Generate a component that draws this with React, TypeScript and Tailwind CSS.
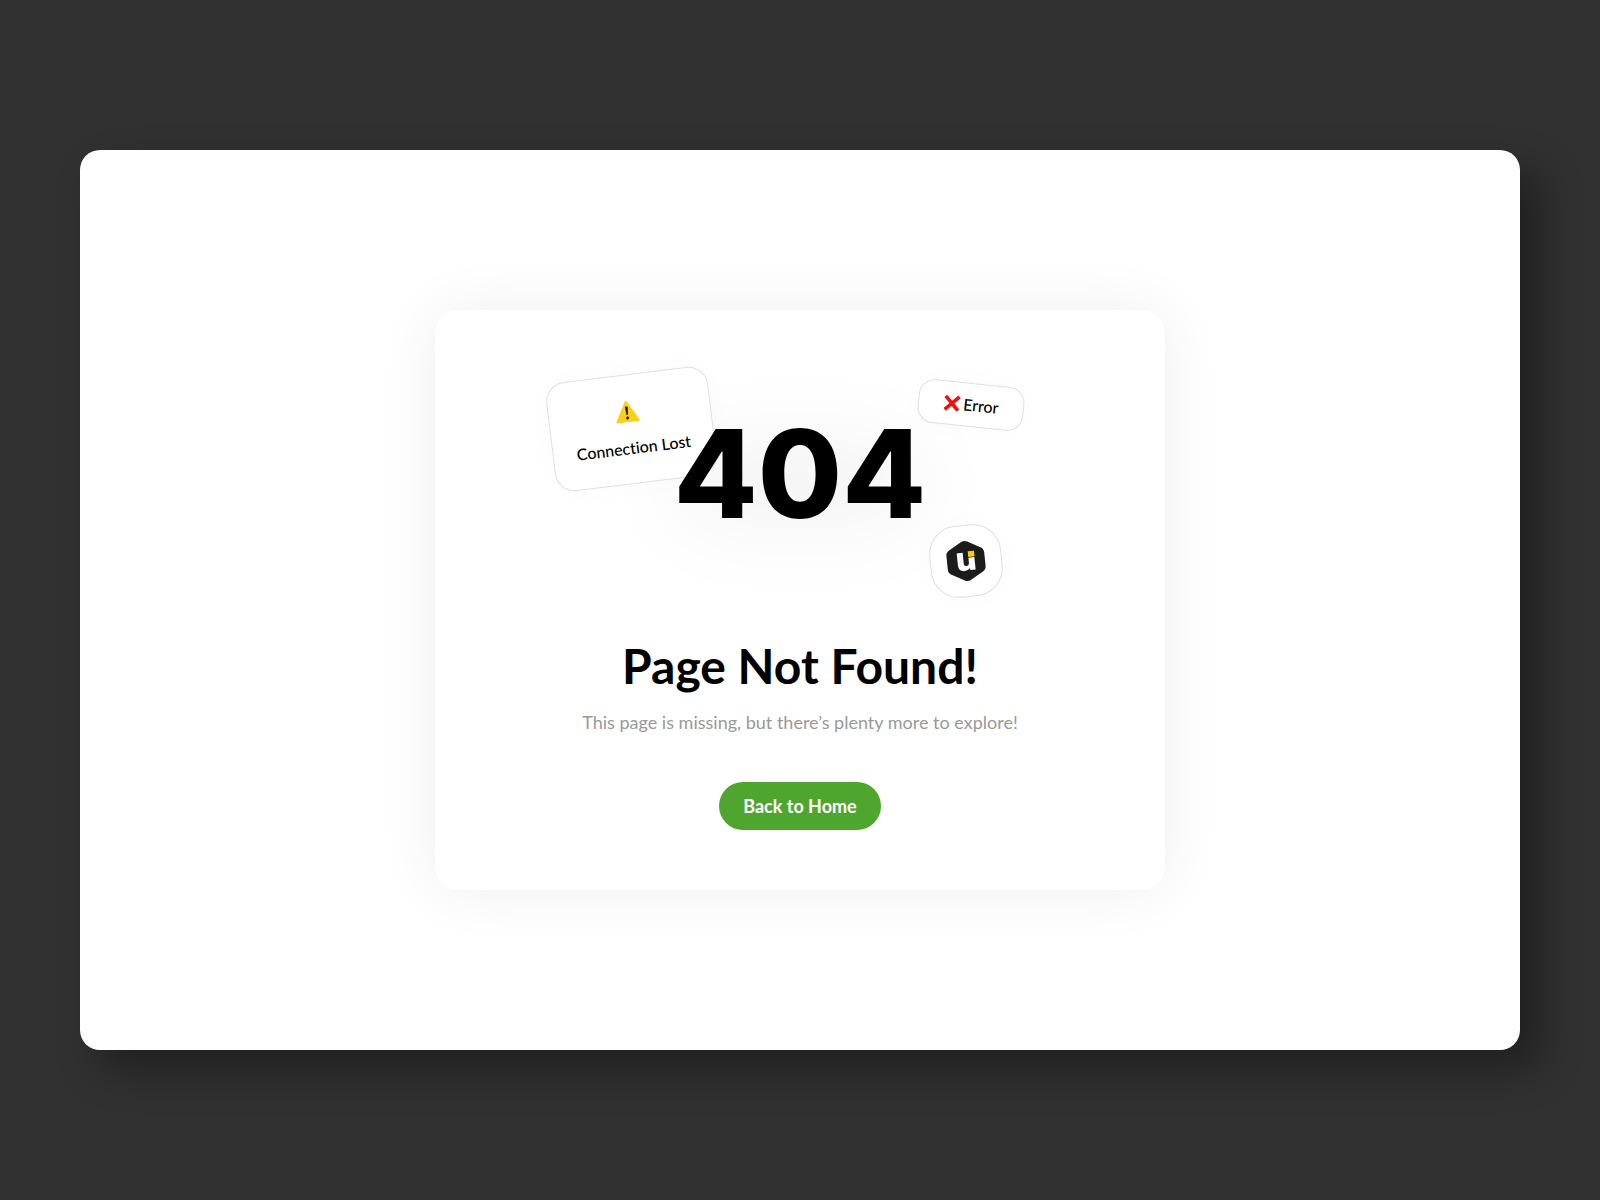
function WarningIcon() {
  return (
    <svg viewBox="0 0 24 22" className="mr-1.5 h-[22px] w-6" aria-hidden="true">
      <path d="M12 1 23 21H1Z" fill="#fdd017" stroke="#fdd017" strokeWidth="1.6" strokeLinejoin="round" />
      <path d="M10.6 6.2h2.8l-.7 8.3h-1.4z" fill="#151515" />
      <circle cx="12" cy="17.6" r="1.4" fill="#151515" />
    </svg>
  );
}

function CrossIcon() {
  return (
    <svg viewBox="0 0 18 18" className="h-[18px] w-[18px]" aria-hidden="true">
      <path d="M2 2.5 15.5 16M15.8 2 2.2 16" fill="none" stroke="#ee1111" strokeWidth="3.6" />
    </svg>
  );
}

function HexLogo() {
  return (
    <svg viewBox="0 0 40 42" className="h-[42px] w-10" role="img" aria-label="ui">
      <path
        d="M16.8 1.8Q20 0 23.2 1.8L35.8 8.8Q39 10.6 39 14.2V27.8Q39 31.4 35.8 33.2L23.2 40.2Q20 42 16.8 40.2L4.2 33.2Q1 31.4 1 27.8V14.2Q1 10.6 4.2 8.8Z"
        fill="#1c1c1c"
      />
      <path d="M11.5 12.5h6v11.2q0 2.3 2.3 2.3 2.9 0 2.9-3V18h6v12.5h-5.4V28.4q-2 2.5-5.6 2.5-6.2 0-6.2-6.3z" fill="#fff" />
      <path d="M22.7 11.6h6.3v5.6h-6.3z" fill="#f9d10a" />
    </svg>
  );
}

export default function App() {
  return (
    <div className="flex min-h-screen bg-[#313131] px-20 py-[150px] font-['Lato','Liberation_Sans',sans-serif] text-black">
      <main className="flex flex-1 items-center justify-center rounded-[20px] bg-white px-6 py-10 shadow-[20px_20px_40px_rgba(0,0,0,0.35)]">
        <section className="flex w-full max-w-[730px] flex-col items-center rounded-3xl bg-white py-[60px] text-center shadow-[0_0_60px_rgba(0,0,0,0.07)]">
          <div className="relative flex h-[266px] w-[480px] justify-center pt-9">
            <div className="absolute top-[76px] left-[120px] h-[76px] w-60 rounded-full bg-black/5 blur-2xl" />
            <div className="absolute top-1 -left-[10px] flex h-[110px] w-[163px] -rotate-7 flex-col items-center justify-center gap-4 rounded-[20px] border border-[#e0e0e0] bg-white shadow-[0_0_30px_rgba(0,0,0,0.02)]">
              <WarningIcon />
              <span className="text-base leading-5 font-medium [font-variant-ligatures:none]">Connection Lost</span>
            </div>
            <div className="absolute top-[13px] left-[358px] flex h-11 w-[106px] rotate-6 items-center justify-center gap-0.5 rounded-2xl border border-[#e0e0e0] bg-white shadow-[0_0_30px_rgba(0,0,0,0.02)]">
              <CrossIcon />
              <span className="text-base leading-5 font-medium">Error</span>
            </div>
            <div className="absolute top-[155px] left-[370px] flex size-[72px] -rotate-6 items-center justify-center rounded-[28px] border border-[#e0e0e0] bg-white shadow-[0_0_30px_rgba(0,0,0,0.02)]">
              <HexLogo />
            </div>
            <p className="relative font-['Inter','Lato',sans-serif] text-[122px] leading-[136px] font-extrabold">404</p>
          </div>
          <h1 className="text-5xl leading-[60px] font-bold">Page Not Found!</h1>
          <p className="mt-3 text-lg leading-7 text-[#999999]">
            This page is missing, but there’s plenty more to explore!
          </p>
          <button type="button" className="mt-[46px] h-12 rounded-full bg-[#4fa62f] px-6 text-lg font-bold text-white">
            Back to Home
          </button>
        </section>
      </main>
    </div>
  );
}
